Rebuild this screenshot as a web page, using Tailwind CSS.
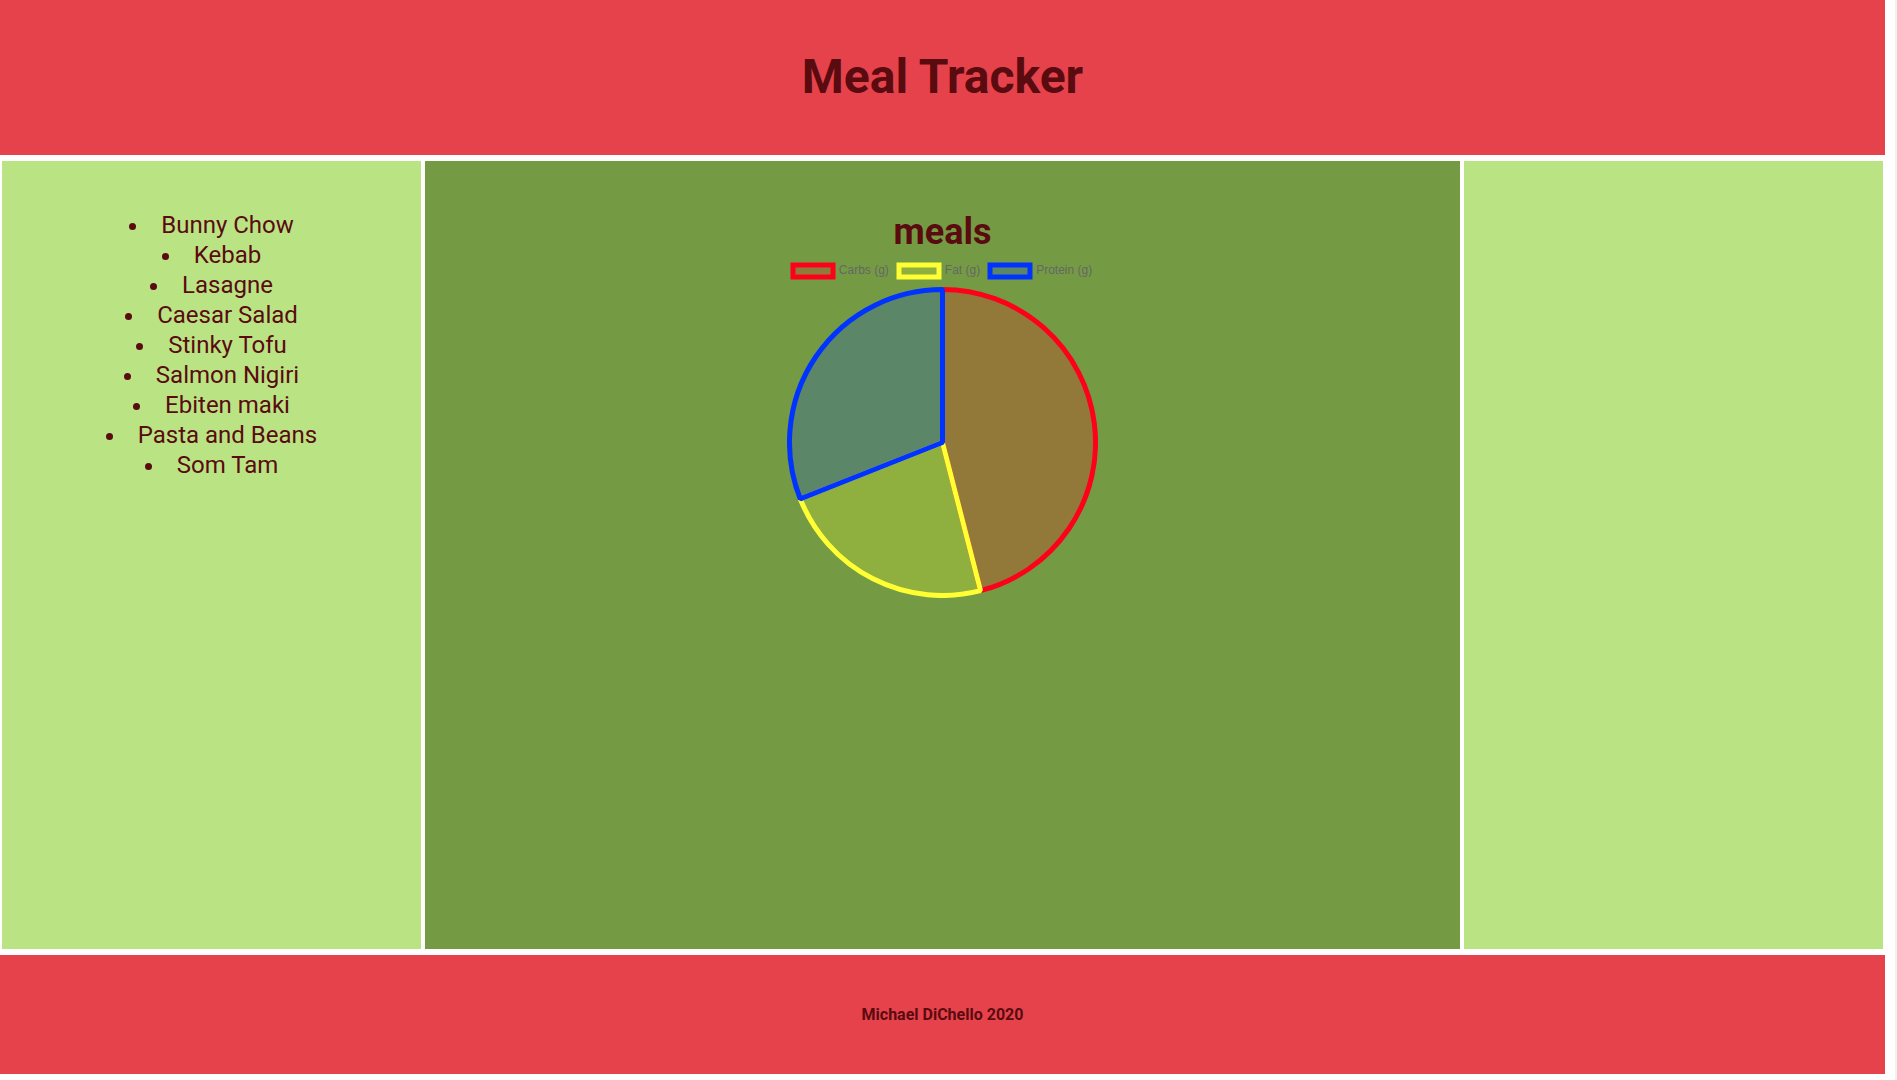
<!DOCTYPE html>
<html lang="en">
<head>
<meta charset="utf-8">
<title>Meal Tracker</title>
<script src="https://cdn.jsdelivr.net/npm/@tailwindcss/browser@4"></script>
</head>
<body class="flex min-h-screen flex-col border-r-2 border-[#f1f1f1] bg-white pr-2.5 pb-1.5 text-center font-['Roboto',sans-serif] text-[#590b10]">
  <header class="bg-[#e6424b] pt-12 pb-[50px]">
    <h1 class="text-5xl/[57px] font-bold">Meal Tracker</h1>
  </header>
  <main class="grid flex-1 grid-cols-[419fr_1035fr_419fr] gap-1 px-0.5 py-1.5">
    <section class="bg-[#bae484] py-[49px]">
      <ul class="list-inside list-disc text-2xl/[30px]">
        <li>Bunny Chow</li>
        <li>Kebab</li>
        <li>Lasagne</li>
        <li>Caesar Salad</li>
        <li>Stinky Tofu</li>
        <li>Salmon Nigiri</li>
        <li>Ebiten maki</li>
        <li>Pasta and Beans</li>
        <li>Som Tam</li>
      </ul>
    </section>
    <section class="flex flex-col items-center bg-[#749b43] py-[50px]">
      <h2 class="text-4xl/[43px] font-bold">meals</h2>
      <ul class="mt-2 flex gap-[7px] pr-[3px] font-['Liberation_Sans',sans-serif] text-xs/[16px] text-[#666666]">
        <li class="flex gap-[3px]">
          <svg class="h-[18px] w-[46px]" viewBox="0 0 46 18"><rect x="3" y="3" width="40" height="12" fill="#ff001a" fill-opacity=".2" stroke="#ff001a" stroke-width="5"/></svg>
          Carbs (g)
        </li>
        <li class="flex gap-[3px]">
          <svg class="h-[18px] w-[46px]" viewBox="0 0 46 18"><rect x="3" y="3" width="40" height="12" fill="#ffff33" fill-opacity=".2" stroke="#ffff33" stroke-width="5"/></svg>
          Fat (g)
        </li>
        <li class="flex gap-[3px]">
          <svg class="h-[18px] w-[46px]" viewBox="0 0 46 18"><rect x="3" y="3" width="40" height="12" fill="#0033ff" fill-opacity=".2" stroke="#0033ff" stroke-width="5"/></svg>
          Protein (g)
        </li>
      </ul>
      <svg class="mt-[7px] size-[311px]" viewBox="-155.5 -155.5 311 311" stroke-width="5" stroke-linejoin="bevel" fill-opacity=".2" role="img" aria-label="Carbs 46%, fat 23%, protein 31%">
        <path d="M0 0V-153A153 153 0 0 1 38.05 148.2Z" fill="#ff001a" fill-opacity=".22" stroke="#ff001a"/>
        <path d="M0 0L38.05 148.2A153 153 0 0 1 -142.26 56.32Z" fill="#ffff33" stroke="#ffff33"/>
        <path d="M0 0L-142.26 56.32A153 153 0 0 1 0 -153Z" fill="#0033ff" stroke="#0033ff"/>
      </svg>
    </section>
    <section class="bg-[#bae484]"></section>
  </main>
  <footer class="bg-[#e6424b] py-[50px]">
    <p class="text-base/[19px] font-bold">Michael DiChello 2020</p>
  </footer>
</body>
</html>
